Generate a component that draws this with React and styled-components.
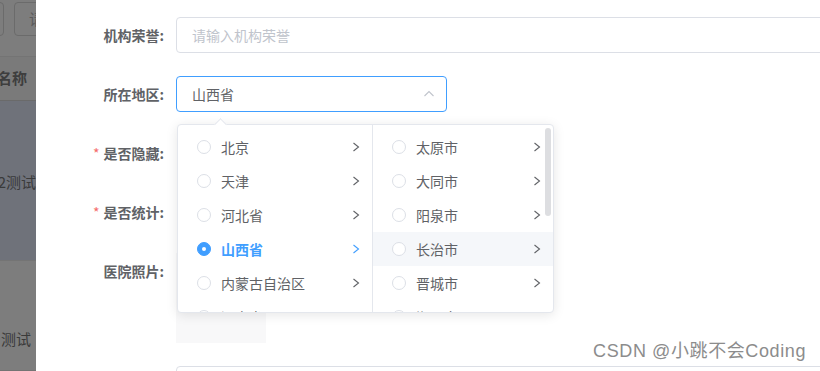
import React from "react";
import styled, { createGlobalStyle } from "styled-components";

const GlobalStyle = createGlobalStyle`
  html, body {
    margin: 0;
    padding: 0;
    overflow: hidden;
    background: #fff;
  }
  body {
    font-family: "Liberation Sans", "Noto Sans CJK SC", sans-serif;
    font-size: 14px;
    color: #606266;
  }
`;

const provinces = [
  { name: "北京" },
  { name: "天津" },
  { name: "河北省" },
  { name: "山西省", active: true },
  { name: "内蒙古自治区" },
  { name: "辽宁省" },
];

const cities = [
  { name: "太原市" },
  { name: "大同市" },
  { name: "阳泉市" },
  { name: "长治市", hover: true },
  { name: "晋城市" },
  { name: "朔州市" },
];

const Chevron = ({ dir = "right", color = "#606266", size = 12 }) => (
  <svg width={size} height={size} viewBox="0 0 12 12" fill="none">
    {dir === "right" ? (
      <path d="M3.5 2 L8.5 6 L3.5 10" stroke={color} strokeWidth="1.1" />
    ) : (
      <path d="M1.5 8 L6 3.5 L10.5 8" stroke={color} strokeWidth="1.1" />
    )}
  </svg>
);

export default function App() {
  return (
    <>
      <GlobalStyle />
      <Screen>
        <Backdrop>
          <BgToolbar>
            <BgButton $w={14} />
            <BgButton $w={40}>请</BgButton>
          </BgToolbar>
          <BgHeader>名称</BgHeader>
          <BgRow $tone="dark" $h={160}>2测试</BgRow>
          <BgRow $h={110}>测试</BgRow>
        </Backdrop>

        <Dialog>
          <Form>
            <FormRow>
              <Label>机构荣誉:</Label>
              <Field>
                <Input $wide>
                  <Placeholder>请输入机构荣誉</Placeholder>
                </Input>
              </Field>
            </FormRow>

            <FormRow>
              <Label>所在地区:</Label>
              <Field>
                <Input $focused>
                  <span>山西省</span>
                  <Chevron dir="up" color="#c0c4cc" />
                </Input>
                <Dropdown>
                  <PopperArrow />
                  <Menu>
                    {provinces.map((p) => (
                      <Node key={p.name} $active={p.active}>
                        <Radio $checked={p.active} />
                        <NodeLabel>{p.name}</NodeLabel>
                        <Chevron color={p.active ? "#409eff" : "#606266"} />
                      </Node>
                    ))}
                  </Menu>
                  <Menu $last>
                    {cities.map((c) => (
                      <Node key={c.name} $hover={c.hover}>
                        <Radio />
                        <NodeLabel>{c.name}</NodeLabel>
                        <Chevron />
                      </Node>
                    ))}
                    <ScrollThumb />
                  </Menu>
                </Dropdown>
              </Field>
            </FormRow>

            <FormRow>
              <Label $required>是否隐藏:</Label>
              <Field />
            </FormRow>

            <FormRow>
              <Label $required>是否统计:</Label>
              <Field />
            </FormRow>

            <FormRow>
              <Label>医院照片:</Label>
              <Field>
                <UploadCard />
              </Field>
            </FormRow>

            <FormRow>
              <Label />
              <Field>
                <Input $wide />
              </Field>
            </FormRow>
          </Form>
          <Watermark>CSDN @小跳不会Coding</Watermark>
        </Dialog>
      </Screen>
    </>
  );
}

const Screen = styled.div`
  display: flex;
  width: 820px;
  height: 371px;
  overflow: hidden;
`;

const Backdrop = styled.div`
  width: 36px;
  flex-shrink: 0;
  background: #7d7d7d;
  display: flex;
  flex-direction: column;
  overflow: hidden;
  color: #3a3a3a;
  font-family: "Noto Sans CJK SC", sans-serif;
  font-size: 15px;
`;

const BgToolbar = styled.div`
  display: flex;
  gap: 10px;
  height: 58px;
  box-sizing: border-box;
  padding-top: 2px;
  margin-left: -12px;
  border-bottom: 1px solid #747474;
`;

const BgButton = styled.div`
  width: ${(p) => p.$w}px;
  flex-shrink: 0;
  height: 34px;
  box-sizing: border-box;
  border: 1px solid #6b6b6b;
  border-radius: 4px;
  padding-left: 14px;
  line-height: 32px;
  color: #5a5a5a;
`;

const BgHeader = styled.div`
  height: 44px;
  line-height: 42px;
  margin-left: -3px;
  font-weight: 700;
  color: #3e3e3e;
  background: #7a7a7a;
  border-bottom: 1px solid #6a6a6a;
  box-sizing: border-box;
  white-space: nowrap;
`;

const BgRow = styled.div`
  height: ${(p) => p.$h}px;
  flex-shrink: 0;
  display: flex;
  align-items: center;
  justify-content: flex-end;
  white-space: nowrap;
  background: ${(p) => (p.$tone === "dark" ? "#6f727a" : "#7d7d7d")};
  border-bottom: 1px solid #747474;
  box-sizing: border-box;
  padding-top: ${(p) => (p.$tone === "dark" ? "2px" : "46px")};
  padding-right: ${(p) => (p.$tone === "dark" ? "0" : "5px")};
`;

const Dialog = styled.div`
  flex: 1;
  background: #fff;
  position: relative;
  overflow: hidden;
`;

const Form = styled.div`
  display: flex;
  flex-direction: column;
  gap: 23px;
  padding-top: 17px;
`;

const FormRow = styled.div`
  display: flex;
  align-items: flex-start;
  min-height: 36px;
`;

const Label = styled.label`
  width: 140px;
  flex-shrink: 0;
  box-sizing: border-box;
  padding-right: 12px;
  text-align: right;
  line-height: 36px;
  font-family: "Noto Sans CJK SC", sans-serif;
  font-size: 14px;
  font-weight: 700;
  color: #606266;
  &::before {
    content: ${(p) => (p.$required ? '"*"' : "none")};
    color: #f56c6c;
    margin-right: 4px;
    font-weight: 400;
  }
`;

const Field = styled.div`
  position: relative;
  flex: 1;
  min-height: 36px;
`;

const Input = styled.div`
  width: ${(p) => (p.$wide ? "660px" : "271px")};
  height: 36px;
  box-sizing: border-box;
  border: 1px solid ${(p) => (p.$focused ? "#409eff" : "#dcdfe6")};
  border-radius: 4px;
  padding: 0 11px 0 15px;
  display: flex;
  align-items: center;
  justify-content: space-between;
  font-family: "Noto Sans CJK SC", sans-serif;
  font-size: 14px;
  color: #606266;
  background: #fff;
`;

const Placeholder = styled.span`
  color: #c0c4cc;
`;

const Dropdown = styled.div`
  position: absolute;
  top: 48px;
  left: 1px;
  z-index: 10;
  display: flex;
  height: 189px;
  box-sizing: border-box;
  background: #fff;
  border: 1px solid #e4e7ed;
  border-radius: 4px;
  box-shadow: 0 2px 12px 0 rgba(0, 0, 0, 0.1);
`;

const PopperArrow = styled.div`
  position: absolute;
  top: -5px;
  left: 38px;
  width: 8px;
  height: 8px;
  background: #fff;
  border-left: 1px solid #e4e7ed;
  border-top: 1px solid #e4e7ed;
  transform: rotate(45deg);
`;

const Menu = styled.div`
  position: relative;
  width: ${(p) => (p.$last ? "180px" : "195px")};
  box-sizing: border-box;
  padding: 5px 0;
  overflow: hidden;
  border-right: ${(p) => (p.$last ? "none" : "1px solid #e4e7ed")};
`;

const Node = styled.div`
  height: 34px;
  display: flex;
  align-items: center;
  padding: 0 10px 0 19px;
  background: ${(p) => (p.$hover ? "#f5f7fa" : "transparent")};
  color: ${(p) => (p.$active ? "#409eff" : "#606266")};
  font-weight: ${(p) => (p.$active ? 700 : 400)};
  font-family: "Noto Sans CJK SC", sans-serif;
  font-size: 14px;
`;

const Radio = styled.span`
  width: 14px;
  height: 14px;
  flex-shrink: 0;
  box-sizing: border-box;
  border-radius: 50%;
  border: 1px solid ${(p) => (p.$checked ? "#409eff" : "#dcdfe6")};
  background: ${(p) => (p.$checked ? "#409eff" : "#fff")};
  display: flex;
  align-items: center;
  justify-content: center;
  margin-right: 10px;
  &::after {
    content: "";
    width: 4px;
    height: 4px;
    border-radius: 50%;
    background: #fff;
    display: ${(p) => (p.$checked ? "block" : "none")};
  }
`;

const NodeLabel = styled.span`
  flex: 1;
`;

const ScrollThumb = styled.div`
  position: absolute;
  top: 3px;
  right: 2px;
  width: 6px;
  height: 88px;
  border-radius: 3px;
  background: #dddee1;
`;

const UploadCard = styled.div`
  width: 90px;
  height: 90px;
  background: #f8f8f9;
`;

const Watermark = styled.div`
  position: absolute;
  right: 14px;
  bottom: 9px;
  font-family: "Liberation Sans", "Noto Sans CJK SC", sans-serif;
  font-size: 18px;
  letter-spacing: 0.6px;
  color: #8c8c8c;
  text-shadow: 0 0 2px #fff;
`;
